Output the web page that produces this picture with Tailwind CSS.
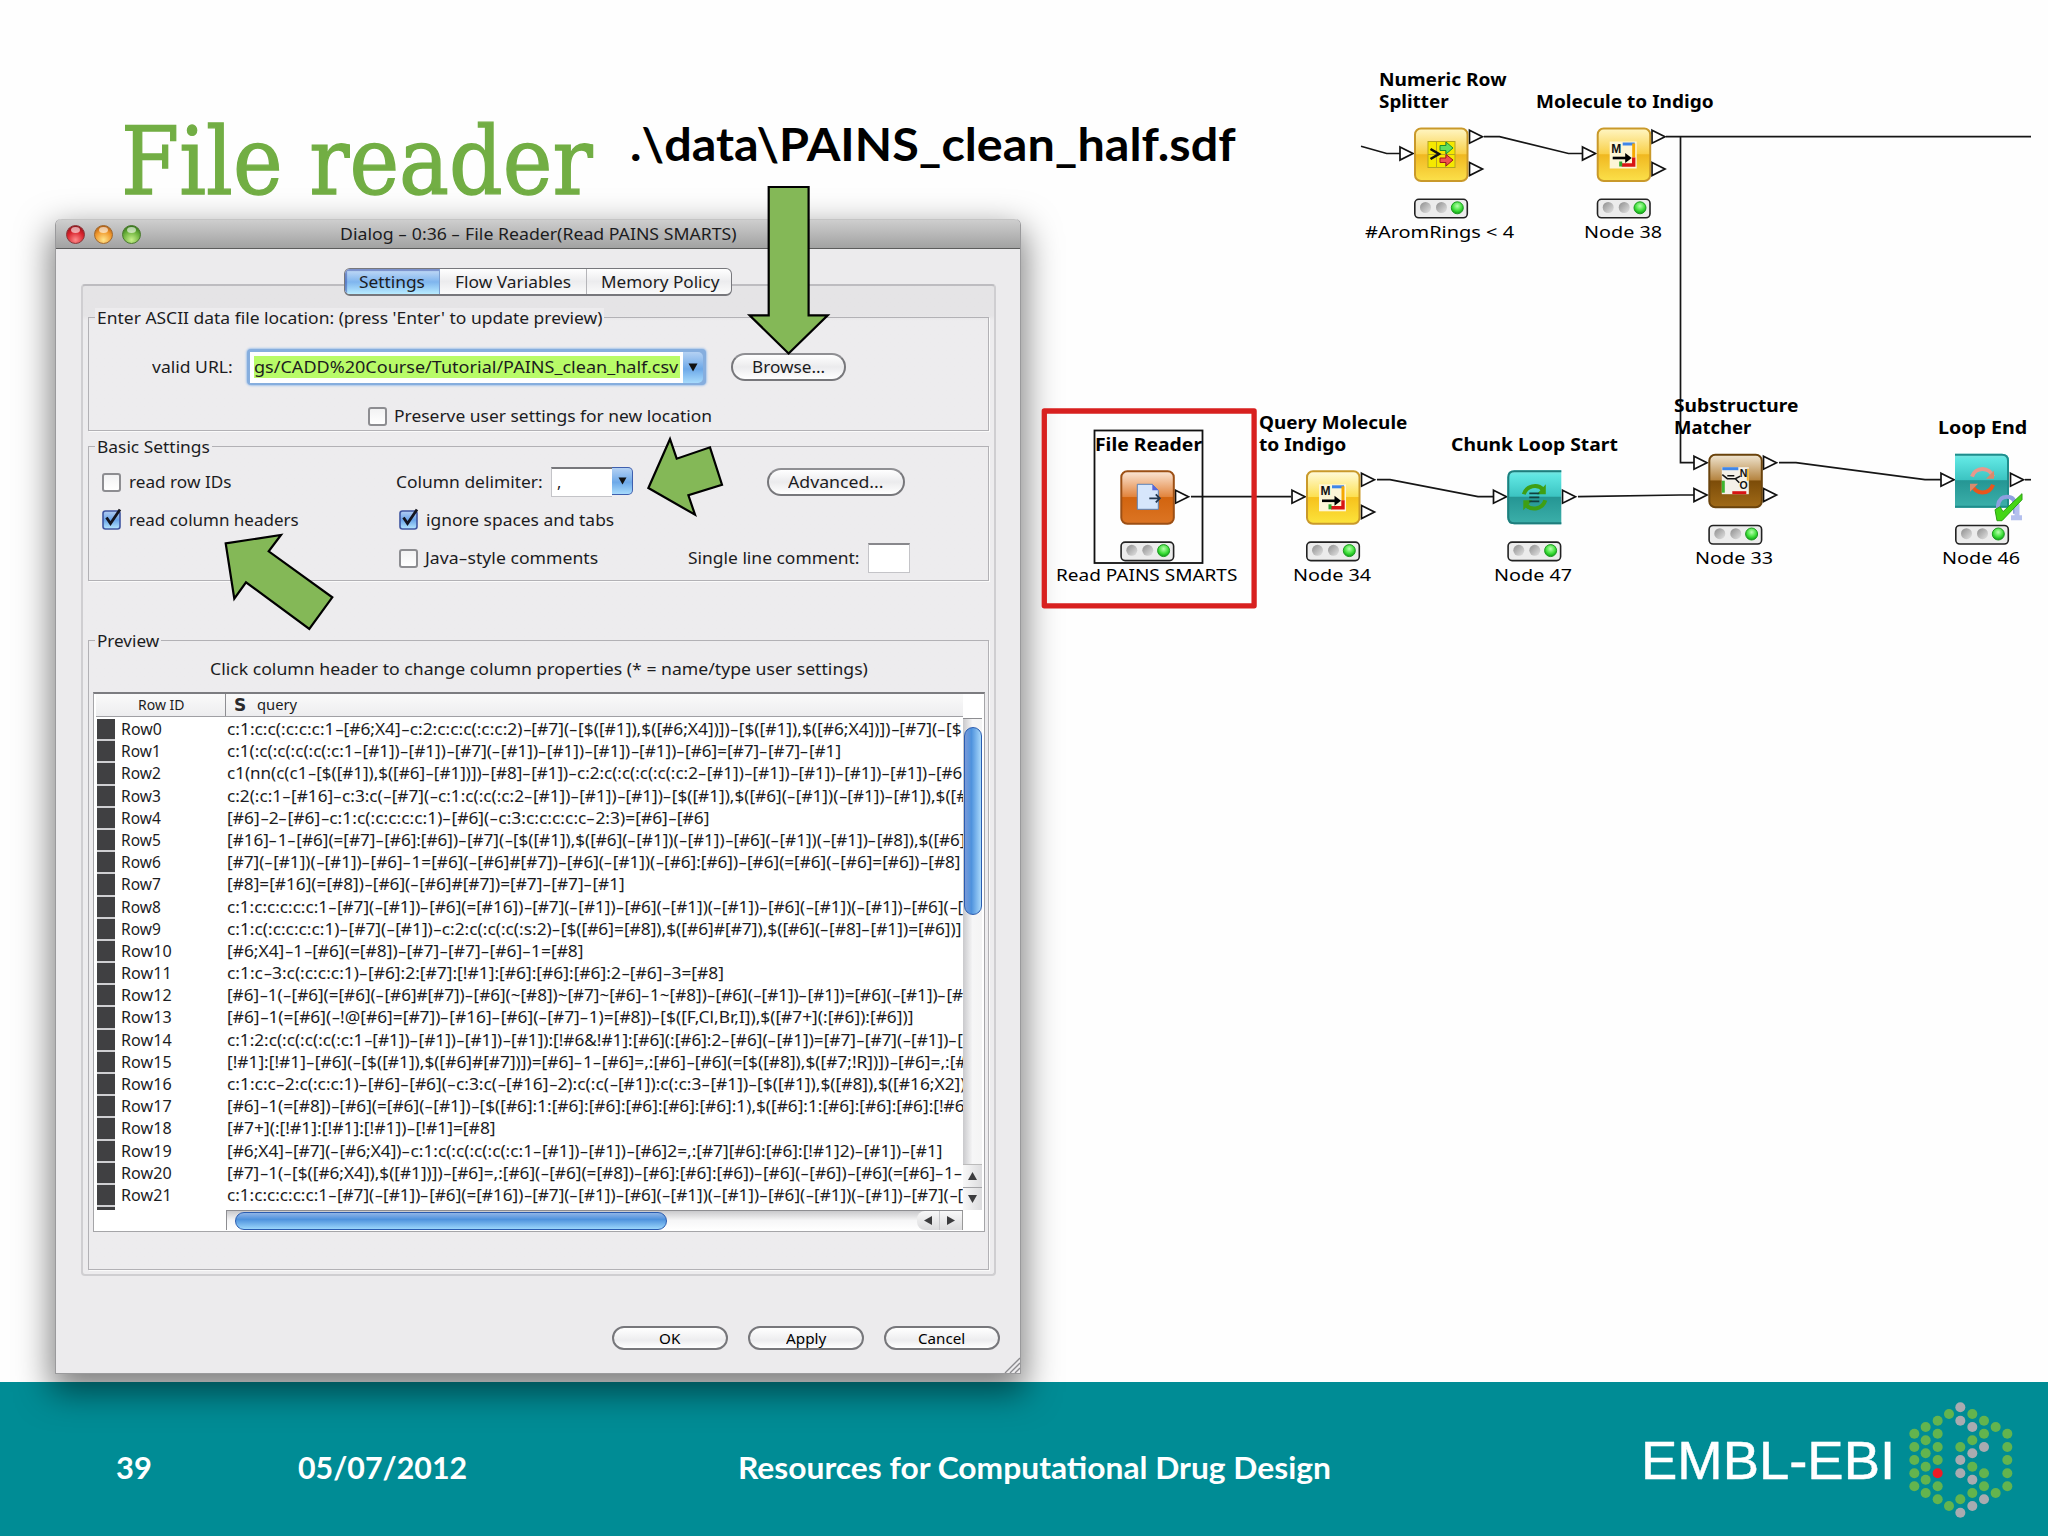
<!DOCTYPE html>
<html lang="en">
<head>
<meta charset="utf-8">
<title>File reader - Resources for Computational Drug Design</title>
<script src="https://cdn.jsdelivr.net/npm/@tailwindcss/browser@4"></script>
</head>
<body class="bg-white">
<div class="relative w-[2048px] h-[1536px] overflow-hidden flex flex-col bg-[#fefefe]">

  <!-- slide title -->
  <header class="h-[219px] shrink-0 flex items-start pl-[121px]">
    <h1 class="w-[509px] pt-[99px] text-[93px] leading-[126px] text-[#72ae44] [-webkit-text-stroke:1.400px_#72ae44] font-['DejaVu_Serif',serif]"><span data-w="472" class="inline-block whitespace-pre origin-left">File reader</span></h1>
    <p class="pt-[116px] text-[45px] leading-[56px] font-bold text-black font-[Lato,sans-serif]"><span data-w="606" class="inline-block whitespace-pre origin-left">.\data\PAINS_clean_half.sdf</span></p>
  </header>

  <div class="grow"></div>

  <footer class="h-[154px] shrink-0 bg-[#008c95] flex items-center pl-[116px] pt-[15px] text-white text-[30px] font-bold font-[Lato,sans-serif] leading-[40px]">
    <div class="w-[182px]"><span data-w="36" class="inline-block whitespace-pre origin-left">39</span></div>
    <div class="w-[440px]"><span data-w="169" class="inline-block whitespace-pre origin-left">05/07/2012</span></div>
    <div class="w-[903px]"><span data-w="593" class="inline-block whitespace-pre origin-left">Resources for Computational Drug Design</span></div>
    <div class="w-[266px] -mt-[14px] text-[54px] leading-[60px] font-normal [-webkit-text-stroke:0.500px_white] font-['Liberation_Sans',sans-serif]"><span data-w="254" class="inline-block whitespace-pre origin-left">EMBL-EBI</span></div>
    <svg id="logo" class="-mt-[13px] w-[107px] h-[120px] shrink-0" viewBox="920 90 321 360"></svg>
  </footer>

  <!-- dialog window -->
  <div class="absolute left-[55px] top-[219px] w-[966px] h-[1155px] rounded-t-[6px] flex flex-col bg-[#ecebed] border-x border-b border-[#9a9a9c] shadow-[0_14px_34px_4px_rgba(0,0,0,0.5)] text-[#1c1c1e] text-[16px] leading-[20px] font-['Noto_Sans',sans-serif]">
    <div class="h-[30px] shrink-0 rounded-t-[6px] border-t border-[#c4c4c4] border-b border-b-[#5c5c5c] bg-linear-to-b from-[#cecece] to-[#a2a2a2] flex items-center pl-[10px]">
      <div class="flex gap-[9px] w-[274px]">
        <svg class="w-[19px] h-[19px]" viewBox="0 0 19 19"><circle cx="9.500" cy="9.500" r="9" fill="url(#red)" stroke="#8a3a3c"/><ellipse cx="9.500" cy="5" rx="4.500" ry="3" fill="#fff" opacity=".6"/></svg>
        <svg class="w-[19px] h-[19px]" viewBox="0 0 19 19"><circle cx="9.500" cy="9.500" r="9" fill="url(#amber)" stroke="#a06a30"/><ellipse cx="9.500" cy="5" rx="4.500" ry="3" fill="#fff" opacity=".6"/></svg>
        <svg class="w-[19px] h-[19px]" viewBox="0 0 19 19"><circle cx="9.500" cy="9.500" r="9" fill="url(#green)" stroke="#4c7a30"/><ellipse cx="9.500" cy="5" rx="4.500" ry="3" fill="#fff" opacity=".6"/></svg>
      </div>
      <span data-w="397" class="inline-block whitespace-pre origin-left">Dialog <span class="inline-block scale-x-160 mx-[1.500px]">-</span> 0:36 <span class="inline-block scale-x-160 mx-[1.500px]">-</span> File Reader(Read PAINS SMARTS)</span>
    </div>

    <div class="relative mt-[35px] ml-[25px] w-[915px] h-[992px] shrink-0 border-2 border-[#cfced1] border-t-[#bdbcc0] rounded-[4px] bg-linear-to-b from-[#e5e4e6] from-[3%] to-[#edecee] to-[3.500%] pl-[5px]">
      <!-- tabs -->
      <div class="absolute left-[261px] -top-[18px] w-[388px] h-[28px] flex rounded-[6px] border border-[#77777c] border-b-2 bg-linear-to-b from-white via-[#ececee] via-[50%] to-[#fbfbfb] overflow-hidden">
        <div class="w-[95px] border-r border-[#7d9fd0] bg-linear-to-b from-[#c6dcf6] via-[#7fb5ee] via-[52%] to-[#b9ecff] flex justify-center items-center shadow-[inset_2px_2px_1px_rgba(50,70,160,0.5)]"><span data-w="66" class="inline-block whitespace-pre origin-left">Settings</span></div>
        <div class="w-[147px] border-r border-[#b5b5b9] flex justify-center items-center"><span data-w="116" class="inline-block whitespace-pre origin-left">Flow Variables</span></div>
        <div class="grow flex justify-center items-center pl-[3px]"><span data-w="119" class="inline-block whitespace-pre origin-left">Memory Policy</span></div>
      </div>

      <!-- file location -->
      <div class="relative mt-[31px] w-[901px] h-[114px] border border-[#b2b1b5] shadow-[1px_1px_0_#fafafa]">
        <div class="absolute left-[6px] -top-[10px] px-[2px] bg-[#edecee]"><span data-w="505" class="inline-block whitespace-pre origin-left">Enter ASCII data file location: (press 'Enter' to update preview)</span></div>
        <div class="mt-[31px] ml-[63px] h-[36px] flex items-center">
          <div class="w-[95px]"><span data-w="81" class="inline-block whitespace-pre origin-left">valid URL:</span></div>
          <div class="w-[459px] h-[36px] p-[3px] pb-[2px] rounded-[4px] bg-[#86aede] shadow-[0_0_2px_1px_#a9c6ea] flex">
            <div class="w-[433px] bg-white p-[3px] pl-[4px] pt-[4px] pb-[5px]"><div class="h-full bg-[#b8fb68] flex items-center"><span data-w="424" class="inline-block whitespace-pre origin-left">gs/CADD%20Course/Tutorial/PAINS_clean_half.csv</span></div></div>
            <div class="grow rounded-r-[5px] bg-linear-to-b from-[#b4d1f3] via-[#6ea9e8] via-[55%] to-[#a7dbfc] flex items-center justify-center"><svg class="w-[10px] h-[9px]" viewBox="0 0 10 9"><path d="M0.500 0.500h9L5 8.500z" fill="#111"/></svg></div>
          </div>
          <div class="ml-[25px] w-[115px] h-[28px] rounded-full border-2 border-[#77777b] border-t-[#8f8f93] bg-linear-to-b from-white via-[#ebebed] via-[50%] to-white flex items-center justify-center"><span data-w="73" class="inline-block whitespace-pre origin-left">Browse...</span></div>
        </div>
        <div class="mt-[21px] ml-[279px] h-[20px] flex items-center gap-[7px]">
          <div class="w-[19px] h-[19px] rounded-[3px] border-2 border-[#8d8d91] bg-linear-to-b from-[#f2f2f3] to-white"></div>
          <span data-w="318" class="inline-block whitespace-pre origin-left">Preserve user settings for new location</span>
        </div>
      </div>

      <!-- basic settings -->
      <div class="relative mt-[15px] w-[901px] h-[135px] border border-[#b2b1b5] shadow-[1px_1px_0_#fafafa]">
        <div class="absolute left-[6px] -top-[10px] px-[2px] bg-[#edecee]"><span data-w="113" class="inline-block whitespace-pre origin-left">Basic Settings</span></div>
        <div class="mt-[20px] h-[30px] flex items-center">
          <div class="w-[307px] pl-[13px] flex items-center gap-[8px]">
            <div class="w-[19px] h-[19px] rounded-[3px] border-2 border-[#8d8d91] bg-linear-to-b from-[#f2f2f3] to-white"></div>
            <span data-w="102" class="inline-block whitespace-pre origin-left">read row IDs</span>
          </div>
          <div class="w-[155px]"><span data-w="147" class="inline-block whitespace-pre origin-left">Column delimiter:</span></div>
          <div class="w-[82px] h-[30px] flex items-start">
            <div class="w-[61px] h-[30px] bg-white border border-[#c4c4c8] border-t-2 border-t-[#77777b] border-r-0 pl-[5px] pt-[3px]">,</div>
            <div class="w-[21px] h-[28px] rounded-r-[5px] border border-[#3f5fae] border-l-0 bg-linear-to-b from-[#b4d1f3] via-[#6ea9e8] via-[55%] to-[#a7dbfc] flex items-center justify-center"><svg class="w-[9px] h-[8px]" viewBox="0 0 10 9"><path d="M0.500 0.500h9L5 8.500z" fill="#111"/></svg></div>
          </div>
          <div class="ml-[134px] w-[138px] h-[28px] rounded-full border-2 border-[#77777b] border-t-[#8f8f93] bg-linear-to-b from-white via-[#ebebed] via-[50%] to-white flex items-center justify-center"><span data-w="95" class="inline-block whitespace-pre origin-left">Advanced...</span></div>
        </div>
        <div class="mt-[13px] h-[19px] flex items-center">
          <div class="w-[310px] pl-[13px] flex items-center gap-[8px]">
            <svg class="w-[19px] h-[22px] -mt-[2px] overflow-visible" viewBox="0 0 19 22"><use href="#checked"/></svg>
            <span data-w="170" class="inline-block whitespace-pre origin-left">read column headers</span>
          </div>
          <svg class="w-[19px] h-[22px] -mt-[2px] mr-[8px] overflow-visible" viewBox="0 0 19 22"><use href="#checked"/></svg>
          <span data-w="188" class="inline-block whitespace-pre origin-left">ignore spaces and tabs</span>
        </div>
        <div class="mt-[14px] h-[30px] flex items-center">
          <div class="ml-[310px] w-[19px] h-[19px] rounded-[3px] border-2 border-[#8d8d91] bg-linear-to-b from-[#f2f2f3] to-white"></div>
          <div class="ml-[7px] w-[263px]"><span data-w="173" class="inline-block whitespace-pre origin-left">Java<span class="inline-block scale-x-160 mx-[1.500px]">-</span>style comments</span></div>
          <div class="w-[180px]"><span data-w="172" class="inline-block whitespace-pre origin-left">Single line comment:</span></div>
          <div class="w-[42px] h-[30px] bg-white border border-[#c4c4c8] border-t-2 border-t-[#88888c]"></div>
        </div>
      </div>

      <!-- preview -->
      <div class="relative mt-[59px] w-[901px] h-[630px] border border-[#b2b1b5] shadow-[1px_1px_0_#fafafa]">
        <div class="absolute left-[6px] -top-[10px] px-[2px] bg-[#edecee]"><span data-w="62" class="inline-block whitespace-pre origin-left">Preview</span></div>
        <div class="mt-[18px] ml-[121px] h-[20px]"><span data-w="658" class="inline-block whitespace-pre origin-left">Click column header to change column properties (* = name/type user settings)</span></div>
        <div class="mt-[13px] ml-[4px] w-[892px] h-[540px] bg-white border border-[#a5a5a8] border-t-2 border-t-[#7c7c80] text-[15.500px]">
          <div class="h-[23px] ml-[2px] w-[867px] border-b border-[#a0a0a4] bg-linear-to-b from-[#fafafa] to-[#ededef] flex items-center text-[14px]">
            <div class="w-[130px] h-[22px] border-r border-[#8e8e92] flex items-center pl-[42px]"><span data-w="47" class="inline-block whitespace-pre origin-left">Row ID</span></div>
            <div class="ml-[8px] w-[23px] text-[17px] font-black text-[#2a2a2c] font-['DejaVu_Sans',sans-serif]">S</div>
            <span data-w="40" class="inline-block whitespace-pre origin-left">query</span>
          </div>
          <div class="flex h-[493px]">
            <div id="rows" class="w-[869px] pl-[3px] pt-[2px] overflow-hidden"></div>
            <!-- vertical scrollbar -->
            <div class="w-[19px] mt-[1px] bg-linear-to-r from-[#c9c9cc] via-[#f6f6f7] via-[50%] to-[#f4f4f4] border-t border-[#8d8d91] flex flex-col items-center">
              <div class="mt-[8px] w-[18px] h-[188px] rounded-full border border-[#2a5cb0] bg-linear-to-r from-[#7799d8] via-[#4e92dd] via-[40%] to-[#a8d8fa]"></div>
              <div class="mt-auto w-[19px] h-[46px] border-t border-[#bbb] bg-linear-to-r from-[#f8f8f8] to-[#dcdcde] flex flex-col">
                <div class="h-[23px] border-b border-[#a5a5a8] flex items-center justify-center"><svg class="w-[9px] h-[8px]" viewBox="0 0 9 8"><path d="M4.500 0L9 8H0z" fill="#3c3c3e"/></svg></div>
                <div class="h-[22px] flex items-center justify-center"><svg class="w-[9px] h-[8px]" viewBox="0 0 9 8"><path d="M4.500 8L9 0H0z" fill="#3c3c3e"/></svg></div>
              </div>
            </div>
          </div>
          <!-- horizontal scrollbar -->
          <div class="ml-[132px] w-[737px] h-[20px] border-l border-t border-[#8d8d91] bg-linear-to-b from-[#c9c9cc] via-[#f6f6f7] via-[50%] to-white flex items-center">
            <div class="ml-[8px] w-[432px] h-[18px] rounded-full border border-[#2a5cb0] bg-linear-to-b from-[#8fb4e6] via-[#4e92dd] via-[40%] to-[#9bd6fb]"></div>
            <div class="ml-auto w-[46px] h-[19px] rounded-l-[8px] border-r border-[#999] bg-linear-to-b from-[#f8f8f8] to-[#dcdcde] flex items-center">
              <div class="w-[24px] h-full flex items-center justify-center border-r border-[#c9c9cc]"><svg class="w-[8px] h-[9px]" viewBox="0 0 8 9"><path d="M0 4.500L8 0v9z" fill="#3c3c3e"/></svg></div>
              <div class="w-[22px] flex items-center justify-center"><svg class="w-[8px] h-[9px]" viewBox="0 0 8 9"><path d="M8 4.500L0 0v9z" fill="#3c3c3e"/></svg></div>
            </div>
          </div>
        </div>
      </div>
    </div>

    <div class="mt-[50px] pr-[20px] flex justify-end gap-[20px] text-[14.500px] text-black">
      <div class="w-[116px] h-[24px] rounded-full border-2 border-[#77777b] bg-linear-to-b from-white via-[#ededef] via-[60%] to-white flex items-center justify-center"><span data-w="21" class="inline-block whitespace-pre origin-left">OK</span></div>
      <div class="w-[116px] h-[24px] rounded-full border-2 border-[#77777b] bg-linear-to-b from-white via-[#ededef] via-[60%] to-white flex items-center justify-center"><span data-w="40" class="inline-block whitespace-pre origin-left">Apply</span></div>
      <div class="w-[116px] h-[24px] rounded-full border-2 border-[#77777b] bg-linear-to-b from-white via-[#ededef] via-[60%] to-white flex items-center justify-center"><span data-w="47" class="inline-block whitespace-pre origin-left">Cancel</span></div>
    </div>
    <svg class="absolute right-0 bottom-0 w-[16px] h-[16px]" viewBox="0 0 16 16"><path d="M1 16L16 1M6 16L16 6M11 16l5-5" stroke="#8a8a8e" stroke-width="1.300"/></svg>
  </div>

  <!-- workflow diagram and callout arrows -->
  <svg class="absolute left-0 top-0 w-[2048px] h-[1382px]" viewBox="0 0 2048 1382" fill="none">
    <defs>
      <radialGradient id="red" cx=".5" cy=".8" r=".8"><stop offset="0" stop-color="#ff8a8a"/><stop offset=".6" stop-color="#d8232c"/><stop offset="1" stop-color="#8e1018"/></radialGradient>
      <radialGradient id="amber" cx=".5" cy=".8" r=".8"><stop offset="0" stop-color="#ffe48a"/><stop offset=".6" stop-color="#f0982c"/><stop offset="1" stop-color="#b05a10"/></radialGradient>
      <radialGradient id="green" cx=".5" cy=".8" r=".8"><stop offset="0" stop-color="#c8f08a"/><stop offset=".6" stop-color="#6cb23c"/><stop offset="1" stop-color="#2f7018"/></radialGradient>
      <radialGradient id="led" cx=".5" cy=".35" r=".65"><stop offset="0" stop-color="#b9ffb0"/><stop offset=".6" stop-color="#3fe03a"/><stop offset="1" stop-color="#0b9c14"/></radialGradient>
      <linearGradient id="off" x1="0" y1="0" x2="1" y2="1"><stop offset="0" stop-color="#8d8d8d"/><stop offset="1" stop-color="#e4e4e4"/></linearGradient>
      <linearGradient id="box" x1="0" y1="0" x2="0" y2="1"><stop offset="0" stop-color="#b4cdf3"/><stop offset=".5" stop-color="#6aa4e8"/><stop offset="1" stop-color="#b5e6ff"/></linearGradient>
      <linearGradient id="yellow" x1="0" y1="0" x2="0" y2="1"><stop offset="0" stop-color="#fffbdc"/><stop offset=".48" stop-color="#fde052"/><stop offset=".5" stop-color="#f6c21c"/><stop offset="1" stop-color="#fce43c"/></linearGradient>
      <linearGradient id="gold" x1="0" y1="0" x2="0" y2="1"><stop offset="0" stop-color="#fff6c4"/><stop offset=".48" stop-color="#f9d048"/><stop offset=".5" stop-color="#f0b820"/><stop offset="1" stop-color="#fbe04a"/></linearGradient>
      <linearGradient id="orange" x1="0" y1="0" x2="0" y2="1"><stop offset="0" stop-color="#fbe6d6"/><stop offset=".48" stop-color="#e2853e"/><stop offset=".5" stop-color="#d2640f"/><stop offset="1" stop-color="#dc7524"/></linearGradient>
      <linearGradient id="brown" x1="0" y1="0" x2="0" y2="1"><stop offset="0" stop-color="#f0e6d2"/><stop offset=".48" stop-color="#b58440"/><stop offset=".5" stop-color="#7c4c08"/><stop offset="1" stop-color="#a06a18"/></linearGradient>
      <linearGradient id="teal" x1="0" y1="0" x2="0" y2="1"><stop offset="0" stop-color="#7fe4e0"/><stop offset=".1" stop-color="#5fe6e2"/><stop offset=".48" stop-color="#3cc4c2"/><stop offset=".5" stop-color="#259694"/><stop offset="1" stop-color="#3cb0aa"/></linearGradient>
      <g id="checked"><rect x="1" y="3" width="17" height="18" rx="2.500" fill="url(#box)" stroke="#3f55a0" stroke-width="1.600"/><path d="M4.500 9.500L8.500 15.500L18 1.500" fill="none" stroke="#15151f" stroke-width="2.800"/></g>
      <path id="port" d="M1 -6.500L14 0L1 6.500z" fill="#fff" stroke="#111" stroke-width="1.700"/>
      <g id="leds">
        <rect x=".8" y=".8" width="52.500" height="18.500" rx="4" fill="#ececec" stroke="#222" stroke-width="1.600"/>
        <circle cx="11.500" cy="9" r="5.500" fill="url(#off)"/><circle cx="27.500" cy="9" r="5.500" fill="url(#off)"/>
        <circle cx="43.300" cy="9.300" r="6" fill="url(#led)" stroke="#1d9a20"/>
      </g>
      <g id="indigo">
        <rect x="13" y="14" width="27" height="27" fill="#fdf6d6"/>
        <path d="M26 16.500H38" stroke="#3f86e8" stroke-width="3"/><path d="M37 16V30" stroke="#f5a800" stroke-width="3"/><path d="M37 30V37.500H25" stroke="#d81414" stroke-width="3.400"/><path d="M24 34v5" stroke="#2fa52f" stroke-width="3"/>
        <text x="14.500" y="25" font-family="Liberation Sans, sans-serif" font-size="12" font-weight="bold" fill="#111">M</text>
        <path d="M16 30.500H30" stroke="#000" stroke-width="2.600"/><path d="M28.500 25.500l6.500 5-6.500 5z" fill="#000"/>
      </g>
    </defs>

    <!-- connections -->
    <g stroke="#161616" stroke-width="1.700">
      <path d="M1361 146.300L1386.700 153.500H1400"/>
      <path d="M1484 136.700H1499.500L1568.500 153.500H1582"/>
      <path d="M1666 136.700H2031"/>
      <path d="M1680.500 136.700V462.700H1694"/>
      <path d="M1191 496.700H1291"/>
      <path d="M1377 479.700H1390L1478 496.700H1493"/>
      <path d="M1578 496.700L1680 495H1694"/>
      <path d="M1779 462.700H1796L1925 479.700H1941"/>
      <path d="M2025 479.700H2031"/>
    </g>
    <use href="#port" x="1399" y="153.500"/><use href="#port" x="1468.500" y="136.700"/><use href="#port" x="1468.500" y="169"/>
    <use href="#port" x="1581.500" y="153.500"/><use href="#port" x="1651" y="136.700"/><use href="#port" x="1651" y="169"/>
    <use href="#port" x="1174.500" y="496.700"/>
    <use href="#port" x="1291" y="496.700"/><use href="#port" x="1360.500" y="479.700"/><use href="#port" x="1360.500" y="512"/>
    <use href="#port" x="1492.500" y="496.700"/><use href="#port" x="1561.500" y="496.700"/>
    <use href="#port" x="1693" y="462.700"/><use href="#port" x="1693" y="495"/><use href="#port" x="1762.500" y="462.700"/><use href="#port" x="1762.500" y="495"/>
    <use href="#port" x="1940" y="479.700"/><use href="#port" x="2009.500" y="479.700"/>

    <!-- numeric row splitter -->
    <g transform="translate(1414 127.500)">
      <rect x="1" y="1" width="52.500" height="52.500" rx="6" fill="url(#gold)" stroke="#c9992a" stroke-width="2"/>
      <rect x="14" y="14" width="27" height="26" fill="#f5e800" stroke="#b5a520"/><path d="M22.500 14v26M31.500 14v26M14 27h27" stroke="#b5a520"/>
      <path d="M16.500 21.500L25 26.500L16.500 31.500" stroke="#111" stroke-width="2.600"/>
      <path d="M26 18h6v-3.500l7 6-7 6V23h-6z" fill="#5fe05f" stroke="#1f8f2f"/><path d="M26 30.500h6V27l7 5.500-7 6V35h-6z" fill="#f05050" stroke="#a01818"/>
      <use href="#leds" x="0" y="71"/>
    </g>
    <!-- molecule to indigo -->
    <g transform="translate(1596.700 127.500)"><rect x="1" y="1" width="52.500" height="52.500" rx="6" fill="url(#gold)" stroke="#c9992a" stroke-width="2"/><use href="#indigo"/><use href="#leds" y="71"/></g>
    <!-- file reader -->
    <rect x="1094.500" y="430.500" width="108" height="132.500" stroke="#111" stroke-width="1.800"/>
    <g transform="translate(1120.300 470.300)">
      <rect x="1" y="1" width="52.500" height="52.500" rx="6" fill="url(#orange)" stroke="#9c4f14" stroke-width="2"/>
      <path d="M17 14h15l6 6v19H17z" fill="#d6e6fb" stroke="#5a82b8"/><path d="M32 14v6h6z" fill="#5a66d8"/><path d="M29 28h10M35.500 24l4 4-4 4" stroke="#22374f" stroke-width="1.800"/>
      <use href="#leds" y="71"/>
    </g>
    <!-- query molecule to indigo -->
    <g transform="translate(1306 470.300)"><rect x="1" y="1" width="52.500" height="52.500" rx="6" fill="url(#yellow)" stroke="#c9992a" stroke-width="2"/><use href="#indigo"/><use href="#leds" y="71"/></g>
    <!-- chunk loop start -->
    <g transform="translate(1507.300 470.300)">
      <path d="M54 0H7Q0 0 0 7V47Q0 54 7 54H54z" fill="url(#teal)"/><path d="M54 1H7Q1 1 1 7V47Q1 53 7 53H54" stroke="#1f7d7c" stroke-width="2"/>
      <path d="M16.500 24A11.500 11.500 0 0 1 36 19.500M38 30A11.500 11.500 0 0 1 18.500 34.500" stroke="#3f9f14" stroke-width="4"/><path d="M38.500 14v10h-9zM16 40V30h9z" fill="#3f9f14"/>
      <path d="M22 23h10M22 27h10M22 31h10" stroke="#12403e" stroke-width="1.800"/>
      <use href="#leds" y="71"/>
    </g>
    <!-- substructure matcher -->
    <g transform="translate(1708.300 453.700)">
      <rect x="1" y="1" width="52.500" height="52.500" rx="6" fill="url(#brown)" stroke="#6a430c" stroke-width="2"/>
      <rect x="13.500" y="13.500" width="27" height="27" fill="#f4f0e8"/>
      <path d="M14 15h16" stroke="#3f86e8" stroke-width="3"/><path d="M15 27v12" stroke="#3fb52f" stroke-width="3"/><path d="M24 39h14" stroke="#d81414" stroke-width="3"/><path d="M39.500 15v12" stroke="#f0b030" stroke-width="2"/>
      <path d="M14 21l5 4h8l5-2.500M19 22h7M27 25l4 4" stroke="#111" stroke-width="1.500"/>
      <g font-family="Liberation Sans, sans-serif" font-size="10.500" font-weight="bold" fill="#111"><text x="31.500" y="23">N</text><text x="31.300" y="35">O</text></g>
      <use href="#leds" y="71"/>
    </g>
    <!-- loop end -->
    <g transform="translate(1955 453.700)">
      <path d="M0 0H47Q54 0 54 7V54H0z" fill="url(#teal)"/><path d="M0 1H47Q53 1 53 7V53H0" stroke="#1f8d8c" stroke-width="2"/>
      <path d="M17 23A11 11 0 0 1 38 23" stroke="#e8988c" stroke-width="4"/><path d="M38 31A11 11 0 0 1 17 31" stroke="#e8561c" stroke-width="4"/><path d="M39 17v8h-8zM15 38v-8h8z" fill="#d98a6c"/>
      <path d="M43 58V52Q44 43 52 43T60 52V60" stroke="#8fa0e0" stroke-width="4"/><path d="M56 64h11M62 50v14" stroke="#b4c0ee" stroke-width="5"/>
      <path d="M40 56l5-3 3 5L67 40v6L47 67h-5z" fill="#45d616" stroke="#2aa010"/>
      <use href="#leds" y="71"/>
    </g>

    <rect x="1044.300" y="411" width="209.800" height="194.800" stroke="#d8201f" stroke-width="5.300" stroke-linejoin="round"/>

    <g fill="#84b857" stroke="#000" stroke-width="2.200">
      <path d="M768.700 187H808.600V315.300H827.700L788.600 353.500L749.600 315.300H768.700z"/>
      <path d="M648.400 488L670 439L676.700 458.700L710 447.300L722 484.700L688.400 495.300L695 514.700z"/>
      <path d="M225.700 543.300L281 535L268.700 551.300L332.300 597.300L309.300 629L246 582.300L234.300 598.700z"/>
    </g>
  </svg>

  <!-- node captions -->
  <div class="text-black text-[17px] leading-[22px] font-['Noto_Sans',sans-serif]">
    <div class="absolute left-[1379px] top-[69px] font-bold"><span data-w="127" class="inline-block whitespace-pre origin-left">Numeric Row</span><br><span data-w="70" class="inline-block whitespace-pre origin-left">Splitter</span></div>
    <div class="absolute left-[1365px] top-[221px]"><span data-w="149" class="inline-block whitespace-pre origin-left">#AromRings &lt; 4</span></div>
    <div class="absolute left-[1536px] top-[91px] font-bold"><span data-w="178" class="inline-block whitespace-pre origin-left">Molecule to Indigo</span></div>
    <div class="absolute left-[1584px] top-[221px]"><span data-w="78" class="inline-block whitespace-pre origin-left">Node 38</span></div>
    <div class="absolute left-[1095px] top-[434px] font-bold"><span data-w="107" class="inline-block whitespace-pre origin-left">File Reader</span></div>
    <div class="absolute left-[1056px] top-[564px]"><span data-w="181" class="inline-block whitespace-pre origin-left">Read PAINS SMARTS</span></div>
    <div class="absolute left-[1259px] top-[412px] font-bold"><span data-w="148" class="inline-block whitespace-pre origin-left">Query Molecule</span><br><span data-w="87" class="inline-block whitespace-pre origin-left">to Indigo</span></div>
    <div class="absolute left-[1293px] top-[564px]"><span data-w="78" class="inline-block whitespace-pre origin-left">Node 34</span></div>
    <div class="absolute left-[1451px] top-[434px] font-bold"><span data-w="167" class="inline-block whitespace-pre origin-left">Chunk Loop Start</span></div>
    <div class="absolute left-[1494px] top-[564px]"><span data-w="78" class="inline-block whitespace-pre origin-left">Node 47</span></div>
    <div class="absolute left-[1674px] top-[395px] font-bold"><span data-w="124" class="inline-block whitespace-pre origin-left">Substructure</span><br><span data-w="77" class="inline-block whitespace-pre origin-left">Matcher</span></div>
    <div class="absolute left-[1695px] top-[547px]"><span data-w="78" class="inline-block whitespace-pre origin-left">Node 33</span></div>
    <div class="absolute left-[1938px] top-[417px] font-bold"><span data-w="89" class="inline-block whitespace-pre origin-left">Loop End</span></div>
    <div class="absolute left-[1942px] top-[547px]"><span data-w="78" class="inline-block whitespace-pre origin-left">Node 46</span></div>
  </div>
</div>

<script>
  // [row id width, query width, query]
  const rows = [
    [41, 735, "c:1:c:c(:c:c:c:1-[#6;X4]-c:2:c:c:c(:c:c:2)-[#7](-[$([#1]),$([#6;X4])])-[$([#1]),$([#6;X4])])-[#7](-[$"],
    [40, 614, "c:1(:c(:c(:c(:c(:c:1-[#1])-[#1])-[#7](-[#1])-[#1])-[#1])-[#1])-[#6]=[#7]-[#7]-[#1]"],
    [40, 735, "c1(nn(c(c1-[$([#1]),$([#6]-[#1])])-[#8]-[#1])-c:2:c(:c(:c(:c(:c:2-[#1])-[#1])-[#1])-[#1])-[#1])-[#6"],
    [40, 740, "c:2(:c:1-[#16]-c:3:c(-[#7](-c:1:c(:c(:c:2-[#1])-[#1])-[#1])-[$([#1]),$([#6](-[#1])(-[#1])-[#1]),$([#"],
    [40, 483, "[#6]-2-[#6]-c:1:c(:c:c:c:c:1)-[#6](-c:3:c:c:c:c:c-2:3)=[#6]-[#6]"],
    [40, 738, "[#16]-1-[#6](=[#7]-[#6]:[#6])-[#7](-[$([#1]),$([#6](-[#1])(-[#1])-[#6](-[#1])(-[#1])-[#8]),$([#6]"],
    [40, 733, "[#7](-[#1])(-[#1])-[#6]-1=[#6](-[#6]#[#7])-[#6](-[#1])(-[#6]:[#6])-[#6](=[#6](-[#6]=[#6])-[#8]"],
    [40, 398, "[#8]=[#16](=[#8])-[#6](-[#6]#[#7])=[#7]-[#7]-[#1]"],
    [40, 736, "c:1:c:c:c:c:c:1-[#7](-[#1])-[#6](=[#16])-[#7](-[#1])-[#6](-[#1])(-[#1])-[#6](-[#1])(-[#1])-[#6](-["],
    [40, 734, "c:1:c(:c:c:c:c:1)-[#7](-[#1])-c:2:c(:c(:c(:s:2)-[$([#6]=[#8]),$([#6]#[#7]),$([#6](-[#8]-[#1])=[#6])]"],
    [51, 356, "[#6;X4]-1-[#6](=[#8])-[#7]-[#7]-[#6]-1=[#8]"],
    [51, 497, "c:1:c-3:c(:c:c:c:1)-[#6]:2:[#7]:[!#1]:[#6]:[#6]:[#6]:2-[#6]-3=[#8]"],
    [51, 736, "[#6]-1(-[#6](=[#6](-[#6]#[#7])-[#6](~[#8])~[#7]~[#6]-1~[#8])-[#6](-[#1])-[#1])=[#6](-[#1])-[#"],
    [51, 686, "[#6]-1(=[#6](-!@[#6]=[#7])-[#16]-[#6](-[#7]-1)=[#8])-[$([F,Cl,Br,I]),$([#7+](:[#6]):[#6])]"],
    [51, 736, "c:1:2:c(:c(:c(:c(:c:1-[#1])-[#1])-[#1])-[#1]):[!#6&!#1]:[#6](:[#6]:2-[#6](-[#1])=[#7]-[#7](-[#1])-["],
    [51, 740, "[!#1]:[!#1]-[#6](-[$([#1]),$([#6]#[#7])])=[#6]-1-[#6]=,:[#6]-[#6](=[$([#8]),$([#7;!R])])-[#6]=,:[#"],
    [51, 739, "c:1:c:c-2:c(:c:c:1)-[#6]-[#6](-c:3:c(-[#16]-2):c(:c(-[#1]):c(:c:3-[#1])-[$([#1]),$([#8]),$([#16;X2])"],
    [51, 738, "[#6]-1(=[#8])-[#6](=[#6](-[#1])-[$([#6]:1:[#6]:[#6]:[#6]:[#6]:[#6]:1),$([#6]:1:[#6]:[#6]:[#6]:[!#6"],
    [51, 269, "[#7+](:[!#1]:[!#1]:[!#1])-[!#1]=[#8]"],
    [51, 716, "[#6;X4]-[#7](-[#6;X4])-c:1:c(:c(:c(:c(:c:1-[#1])-[#1])-[#6]2=,:[#7][#6]:[#6]:[!#1]2)-[#1])-[#1]"],
    [51, 736, "[#7]-1(-[$([#6;X4]),$([#1])])-[#6]=,:[#6](-[#6](=[#8])-[#6]:[#6]:[#6])-[#6](-[#6])-[#6](=[#6]-1-"],
    [51, 736, "c:1:c:c:c:c:c:1-[#7](-[#1])-[#6](=[#16])-[#7](-[#1])-[#6](-[#1])(-[#1])-[#6](-[#1])(-[#1])-[#7](-["],
    [51, 736, "c:1:c:c:c:c:c:1-[#7](-[#1])-[#6](=[#16])-[#7](-[#1])-[#6](-[#1])(-[#1])-[#6](-[#1])(-[#1])-[#7](-["]
  ];
  const dash = '<span class="inline-block scale-x-160 mx-[1.500px]">-</span>';
  const esc = q => q.replace(/&/g, '&amp;').split('-').join(dash);
  document.getElementById('rows').innerHTML = rows.map(([idW, w, q], i) => `
    <div class="flex h-[22.190px] items-center">
      <div class="w-[18px] h-full border-b-2 border-[#cfcfd2] bg-[#404042]"></div>
      <div class="w-[107px] h-full pl-[6px]"><span data-w="${idW}" class="inline-block whitespace-pre origin-left">Row${i}</span></div>
      <div class="pl-[5px] w-[741px] h-full overflow-hidden whitespace-nowrap"><span data-w="${w}" class="inline-block whitespace-pre origin-left">${esc(q)}</span></div>
    </div>`).join('');

  // logo dots: column x, then y positions (s = silver, r = red)
  const dots = {
    942: '191 231 270 310 349', 976: '171 211 250 290 329 369', 1012: '152 191 231 270 310r 349 388',
    1046: '132 408', 1080: '112s 152s 231 270s 310s 388 428s', 1116: '132 171s 211 250s 290 329s 369 408s',
    1151: '152 191 231s 310 349 388s', 1186: '171 369', 1221: '191 231 270 310 349'
  };
  const fills = { s: '#a9abb0', r: '#ee1c25' };
  document.getElementById('logo').innerHTML = Object.entries(dots).map(([x, ys]) =>
    ys.split(' ').map(y => `<circle cx="${x}" cy="${parseInt(y)}" r="15" fill="${fills[y.slice(-1)] || '#63b44e'}"/>`).join('')).join('');

  // stretch each label to its set width, again whenever its own width changes
  function fit(el) {
    const natural = el.offsetWidth, w = +el.dataset.w;
    if (!natural) return;
    el.style.transform = `scaleX(${w / natural})`;
    el.style.marginRight = (w - natural) + 'px';
  }
  const labels = document.querySelectorAll('[data-w]');
  const watcher = new ResizeObserver(entries => entries.forEach(e => fit(e.target)));
  labels.forEach(el => watcher.observe(el));
  window.addEventListener('load', () => labels.forEach(fit));
</script>
</body>
</html>
